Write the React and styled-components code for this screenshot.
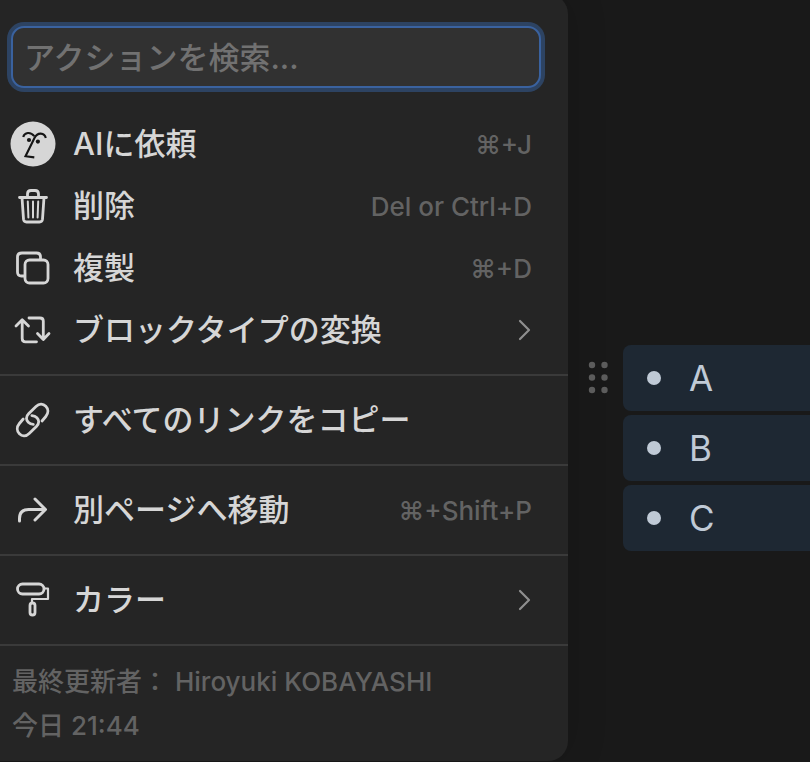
import React from "react";
import styled, { createGlobalStyle } from "styled-components";

const GlobalStyle = createGlobalStyle`
  * { box-sizing: border-box; }
  body {
    margin: 0;
    background: #191919;
    font-family: Inter, "Noto Sans CJK JP", sans-serif;
  }
`;

const Page = styled.main`
  display: flex;
  align-items: flex-start;
  min-height: 100vh;
  overflow: hidden;
  background: #191919;
`;

const Menu = styled.section`
  flex: 0 1 568px;
  min-width: 0;
  margin-top: -6px;
  padding-top: 32px;
  border-radius: 0 20px 20px 0;
  background: #252525;
  box-shadow: 0 0 40px rgba(0, 0, 0, 0.15);
`;

const Search = styled.input`
  display: block;
  width: calc(100% - 38px);
  height: 62px;
  margin: 0 27px 12px 11px;
  padding: 0 11px;
  border: 2px solid #3a629f;
  border-radius: 13px;
  outline: none;
  background: #313131;
  box-shadow: 0 0 0 4px #2d4362;
  color: #d6d6d6;
  font: 500 31px/40px Inter, "Noto Sans CJK JP", sans-serif;

  &::placeholder {
    color: #717171;
    opacity: 1;
  }
`;

const Group = styled.div`
  padding: 13px 0;
  border-bottom: 2px solid #3a3a3a;
`;

const Item = styled.button`
  display: flex;
  align-items: center;
  gap: 17px;
  width: 100%;
  height: 62px;
  padding: 0 36px 0 10px;
  border: 0;
  background: transparent;
  color: #d6d6d6;
  font: 500 31px/44px Inter, "Noto Sans CJK JP", sans-serif;
  text-align: left;
  white-space: nowrap;
  cursor: pointer;
`;

const IconSlot = styled.span`
  display: grid;
  place-items: center;
  flex: none;
  width: 46px;
  height: 46px;
`;

const Icon = styled.svg`
  display: block;
  fill: none;
  stroke: currentColor;
  stroke-width: 2.8;
  stroke-linecap: round;
  stroke-linejoin: round;
`;

const Label = styled.span`
  flex: 1;
`;

const Shortcut = styled.kbd`
  padding-top: 2px;
  color: #636363;
  font: 500 26px/36px Inter, "Noto Sans CJK JP", sans-serif;
`;

const Chevron = styled(Icon)`
  color: #8f8f8f;
`;

const Footer = styled.footer`
  padding: 14px 12px 13px;
  color: #636363;
  font-size: 26px;
  font-weight: 500;
  line-height: 44px;

  p { margin: 0; }
`;

const Editor = styled.section`
  display: flex;
  flex: 1;
  align-items: flex-start;
  gap: 14px;
  padding: 345px 0 0 20px;
`;

const Handle = styled.button`
  display: grid;
  place-items: center;
  flex: none;
  width: 21px;
  height: 66px;
  padding: 0;
  border: 0;
  background: transparent;
  color: #5c5c5c;
  cursor: grab;
`;

const BlockList = styled.ul`
  display: flex;
  flex: 1;
  flex-direction: column;
  gap: 4px;
  margin: 0;
  padding: 0;
  list-style: none;
`;

const Block = styled.li`
  display: flex;
  align-items: center;
  gap: 28px;
  height: 66px;
  padding-left: 24px;
  border-radius: 8px 0 0 8px;
  background: #1e2833;
  color: #c0cad6;
  font-size: 35px;
  line-height: 48px;

  &::before {
    content: "";
    width: 14px;
    height: 14px;
    border-radius: 50%;
    background: currentColor;
  }
`;

const linkHalf =
  "M23.3 27.3C19 27 16.5 24 16.5 21.2C16.5 19 17.3 18 18.8 16.5L26 9.5C29.5 6 33.3 6.8 35.8 9.3C38.5 12 38.7 16 35.8 19.5L32 24";

const icons = {
  face: (
    <Icon width="46" height="46" viewBox="0 0 46 46">
      <circle cx="23" cy="23" r="22.5" fill="#d6d6d6" stroke="none" />
      <g stroke="#151515" strokeWidth="2.1" strokeLinecap="butt" strokeLinejoin="miter">
        <path d="M13.2 16C14.5 11.3 20.5 10.3 24.3 15.2" />
        <path d="M35.8 17C34.5 11.5 27.5 11 24.6 16.8L15.5 35.2L24.3 36.4" />
      </g>
      <g fill="#151515" stroke="none">
        <circle cx="19" cy="19" r="2.1" />
        <circle cx="27.9" cy="20.6" r="2.1" />
      </g>
    </Icon>
  ),
  trash: (
    <Icon width="46" height="46" viewBox="0 0 46 46">
      <path d="M9.5 14.5H36.5M12 14.5L13.5 36.2Q13.8 39 16.5 39H29.5Q32.2 39 32.5 36.2L34 14.5" />
      <path d="M17.5 14V11Q17.5 7.5 21 7.5H25Q28.5 7.5 28.5 11V14" />
      <path d="M17.8 18.5L18.4 34.5M23 18.5V34.5M28.2 18.5L27.6 34.5" strokeWidth="2" />
    </Icon>
  ),
  copy: (
    <Icon width="46" height="46" viewBox="0 0 46 46">
      <rect x="15" y="15" width="23" height="23" rx="4.5" />
      <path d="M30.5 14V12Q30.5 8 26.5 8H12Q7.5 8 7.5 12V27Q7.5 31 11.5 31H14" />
    </Icon>
  ),
  convert: (
    <Icon width="46" height="46" viewBox="0 0 46 46">
      <path d="M6 19L12.2 12.8L18.5 19M12.2 13V31.5Q12.2 34.8 15.5 34.8H26.5" />
      <path d="M39 26.5L33.3 32.5L27.5 26.5M33.3 32V14Q33.3 11 30 11H19" />
    </Icon>
  ),
  link: (
    <Icon width="46" height="46" viewBox="0 0 46 46">
      <path d={linkHalf} />
      <path d={linkHalf} transform="rotate(180 22.6 23)" />
    </Icon>
  ),
  move: (
    <Icon width="46" height="46" viewBox="0 0 46 46">
      <path d="M9.5 34V31.5Q9.5 22.5 18.5 22.5H35M25 12L35.5 22.5L25 33" strokeWidth="3" />
    </Icon>
  ),
  paint: (
    <Icon width="46" height="46" viewBox="0 0 46 46" strokeLinejoin="miter">
      <rect x="7.5" y="7" width="26.5" height="10" rx="5" />
      <path d="M34 11.5H38V22H22V26" strokeLinecap="butt" strokeWidth="2.2" />
      <rect x="20" y="26" width="5" height="12" rx="2.5" />
    </Icon>
  ),
};

const groups = [
  [
    { icon: "face", label: "AIに依頼", shortcut: "⌘+J" },
    { icon: "trash", label: "削除", shortcut: "Del or Ctrl+D" },
    { icon: "copy", label: "複製", shortcut: "⌘+D" },
    { icon: "convert", label: "ブロックタイプの変換", submenu: true },
  ],
  [{ icon: "link", label: "すべてのリンクをコピー" }],
  [{ icon: "move", label: "別ページへ移動", shortcut: "⌘+Shift+P" }],
  [{ icon: "paint", label: "カラー", submenu: true }],
];

function MenuItem({ icon, label, shortcut, submenu }) {
  return (
    <Item type="button" aria-haspopup={submenu ? "menu" : undefined}>
      <IconSlot aria-hidden="true">{icons[icon]}</IconSlot>
      <Label>{label}</Label>
      {shortcut && <Shortcut>{shortcut}</Shortcut>}
      {submenu && (
        <Chevron width="14" height="22" viewBox="0 0 14 22" aria-hidden="true">
          <path d="M2 2L11 11L2 20" strokeWidth="2.2" />
        </Chevron>
      )}
    </Item>
  );
}

export default function App() {
  return (
    <Page lang="ja">
      <GlobalStyle />
      <Menu>
        <Search type="text" aria-label="アクションを検索" placeholder="アクションを検索..." />
        {groups.map((items) => (
          <Group key={items[0].icon}>
            {items.map((item) => (
              <MenuItem key={item.icon} {...item} />
            ))}
          </Group>
        ))}
        <Footer>
          <p>最終更新者： Hiroyuki KOBAYASHI</p>
          <p>今日 21:44</p>
        </Footer>
      </Menu>
      <Editor>
        <Handle type="button" aria-label="ドラッグして移動">
          <svg width="21" height="34" viewBox="0 0 21 34" fill="currentColor" aria-hidden="true">
            {[4, 16.5, 29].map((y) => (
              <g key={y}>
                <circle cx="4" cy={y} r="3.2" />
                <circle cx="16.5" cy={y} r="3.2" />
              </g>
            ))}
          </svg>
        </Handle>
        <BlockList>
          {["A", "B", "C"].map((text) => (
            <Block key={text}>{text}</Block>
          ))}
        </BlockList>
      </Editor>
    </Page>
  );
}
